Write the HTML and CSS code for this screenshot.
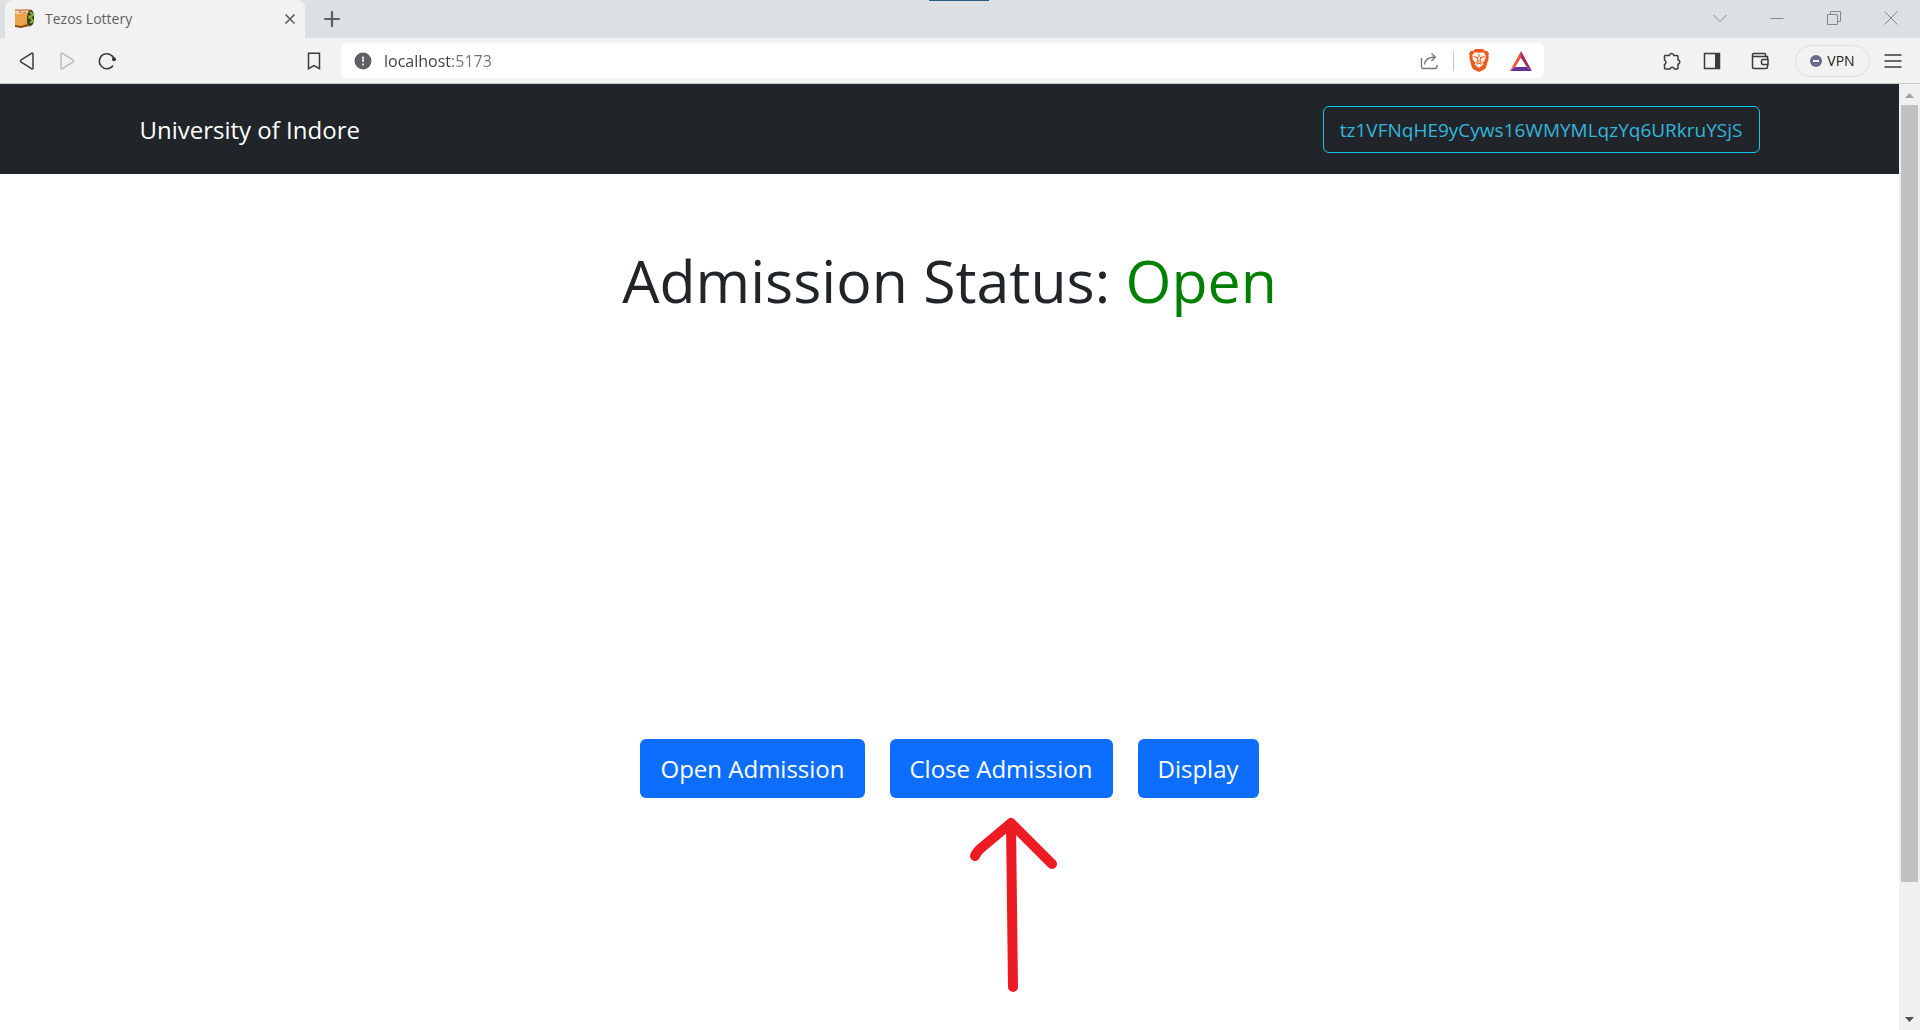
FILE: index.html
```html
<!DOCTYPE html>
<html lang="en">
<head>
<meta charset="utf-8">
<meta name="viewport" content="width=device-width, initial-scale=1">
<title>Tezos Lottery</title>
<link rel="stylesheet" href="styles.css">
</head>
<body>
<div class="window">
  <header class="tabstrip">
    <span class="grip" aria-hidden="true"></span>
    <div class="tab">
      <svg class="favicon" width="20" height="20" viewBox="0 0 20 20" aria-hidden="true">
        <path d="M0 1.500L15 .5l1 17L5 18.500 0 17z" fill="#e9a54b"/>
        <path d="M0 1.500L14 1l-1 3L1 5z" fill="#f6d7ae"/>
        <path d="M0 1h14M4 3h3M8 4l3-1" stroke="#c2572b" fill="none"/>
        <path d="M0 17l6 1 7-2" stroke="#8c4a17" stroke-width="2" fill="none"/>
        <path d="M15 1c3-1 4 4 4 8s-1 8-4 8-3-4-3-8 1-7 3-8z" fill="#33401d"/>
        <path d="M15 3l3 3-3 2 3 4-3 2" stroke="#82b536" stroke-width="2" fill="none"/>
        <path d="M14 6v4M16 12v2" stroke="#d99a35" fill="none"/>
      </svg>
      <span class="tab-title">Tezos Lottery</span>
      <button class="tab-close" type="button" aria-label="Close tab">
        <svg width="12" height="12" viewBox="0 0 12 12"><path d="M1.500 1.500l9 9m0-9l-9 9" stroke="#5a5c5e" stroke-width="1.600"/></svg>
      </button>
    </div>
    <button class="new-tab" type="button" aria-label="New tab">
      <svg width="16" height="16" viewBox="0 0 16 16"><path d="M8 1v14M1 8h14" stroke="#5c5e60" stroke-width="2.200" stroke-linecap="round"/></svg>
    </button>
    <div class="window-controls">
      <button type="button" aria-label="Search tabs"><svg width="14" height="14" viewBox="0 0 14 14"><path d="M.5 4L7 10.500 13.500 4"/></svg></button>
      <button type="button" aria-label="Minimize"><svg width="14" height="14" viewBox="0 0 14 14"><path d="M.5 7.500h13"/></svg></button>
      <button type="button" aria-label="Restore"><svg width="14" height="14" viewBox="0 0 14 14"><path d="M.5 3.500h10v10H.5zM3.500 3V.5h10v10H11"/></svg></button>
      <button type="button" aria-label="Close"><svg width="14" height="14" viewBox="0 0 14 14"><path d="M.5.5l13 13m0-13l-13 13"/></svg></button>
    </div>
  </header>

  <div class="toolbar">
    <div class="nav-buttons">
      <button class="icon-button" type="button" aria-label="Back"><svg width="18" height="18" viewBox="0 0 18 18"><path d="M13.500 1.300Q15 .6 15 2.300v13.400q0 1.700-1.500 1L3.200 10.100q-1.500-1.100 0-2.200z"/></svg></button>
      <button class="icon-button icon-disabled" type="button" aria-label="Forward" disabled><svg width="18" height="18" viewBox="0 0 18 18"><path d="M4.500 1.300Q3 .6 3 2.300v13.400q0 1.700 1.500 1l10.300-6.600q1.500-1.100 0-2.200z"/></svg></button>
      <button class="icon-button" type="button" aria-label="Reload"><svg width="18" height="18" viewBox="0 0 18 18"><path d="M15 13.500A7.500 7.500 0 1 1 16 7"/><circle cx="16" cy="7.200" r="2" fill="#333"/></svg></button>
      <button class="icon-button bookmark" type="button" aria-label="Bookmark"><svg width="18" height="18" viewBox="0 0 18 18"><path d="M3.500 1.200h11v15.500L9 13.600l-5.500 3.100z"/></svg></button>
    </div>
    <div class="address">
      <button class="site-info" type="button" aria-label="Site information"><svg width="18" height="18" viewBox="0 0 18 18"><circle cx="9" cy="9" r="8.500" fill="#5f6066"/><path d="M9 4.500V10M9 11.500v2" stroke="#fff" stroke-width="1.500"/></svg></button>
      <input class="url" type="text" value="localhost:5173" aria-label="Address">
      <button class="share" type="button" aria-label="Share"><svg width="18" height="18" viewBox="0 0 18 18"><path d="M1.500 6v8.500q0 2 2 2H15q2 0 2-2V13M4.500 12.500Q5 5.500 15 5M11.500 1.500L15.300 5l-3.800 4" fill="none" stroke="#75777a" stroke-width="1.400"/></svg></button>
      <span class="divider"></span>
      <button class="shield" type="button" aria-label="Brave Shields"><svg width="20" height="23" viewBox="0 0 20 23"><path d="M6 0h8l2 2 2-.3L20 4.500l-.7 2.300.5 1.700-2.600 9.400q-.5 1.800-2 2.700L10 23l-5.200-2.400q-1.500-.9-2-2.700L.2 8.500l.5-1.700L0 4.500l2-2.800 2 .3z" fill="#ec5a20"/><path d="M10 3.800l4.500-.5 2.200 3-.5 4.200-2.400 3.300.4 2-4.200 3.200-4.200-3.200.4-2-2.400-3.300-.5-4.200 2.200-3z" fill="#fff2eb"/><path d="M4.500 7.500l4 1.200.5 4-2.500.8M15.500 7.500l-4 1.200-.5 4 2.500.8M7.500 15.300L10 14l2.500 1.300M10 5v3" fill="none" stroke="#ec5a20" stroke-width="1.100"/></svg></button>
      <button class="rewards" type="button" aria-label="Brave Rewards"><svg width="22" height="20" viewBox="0 0 22 20"><path d="M11 0v7L5.500 15.500 0 20z" fill="#ef5a35"/><path d="M11 0l11 20-5.500-4.500L11 7z" fill="#9e2a67"/><path d="M0 20l5-4h12l5 4z" fill="#64309a"/><path d="M11 7l5 9H6z" fill="#fff"/></svg></button>
    </div>
    <div class="tools">
      <button class="icon-button" type="button" aria-label="Extensions"><svg width="18" height="18" viewBox="0 0 18 18"><path d="M2 3.500h4.200a2.400 2.400 0 0 1 4.700 0H14q1 0 1 1v3.200a2.300 2.300 0 0 1 0 4.500V16q0 1-1 1h-2.600a2.300 2.300 0 0 0-4.400 0H2.500q-1 0-1-1v-3.500a2.400 2.400 0 0 0 0-4.400V4.500z"/></svg></button>
      <button class="icon-button" type="button" aria-label="Sidebar"><svg width="18" height="18" viewBox="0 0 18 18"><path d="M1.500 1.500h15v15h-15z"/><rect x="12" y="1" width="5" height="16" fill="#3b3b3b"/></svg></button>
      <button class="icon-button wallet" type="button" aria-label="Wallet"><svg width="18" height="18" viewBox="0 0 18 18"><path d="M16.500 7V4.500h-15M14.500 4V2.500Q14.500 1.500 13.500 1.500H3q-1.500 0-1.500 1.500v12q0 1.500 1.500 1.500h12q1.500 0 1.500-1.500v-2M17 7.500h-5q-1.500 0-1.500 1.500v2q0 1.500 1.500 1.500h5z"/></svg></button>
      <button class="vpn" type="button"><svg width="12" height="12" viewBox="0 0 12 12" aria-hidden="true"><circle cx="6" cy="6" r="6" fill="#666d8f"/><path d="M3 6h6" stroke="#fff" stroke-width="1.800"/></svg>VPN</button>
      <button class="icon-button" type="button" aria-label="Menu"><svg width="18" height="14" viewBox="0 0 18 14"><path d="M.5 1h17M.5 7h17M.5 13h17"/></svg></button>
    </div>
  </div>

  <div class="viewport">
    <div class="page">
      <nav class="navbar">
        <div class="container">
          <a class="brand" href="#">University of Indore</a>
          <button class="account" type="button">tz1VFNqHE9yCyws16WMYMLqzYq6URkruYSjS</button>
        </div>
      </nav>
      <main class="content">
        <h1 class="status">Admission Status: <span class="status-open">Open</span></h1>
        <div class="actions">
          <button class="action" type="button">Open Admission</button>
          <div class="pointed">
            <button class="action" type="button">Close Admission</button>
            <svg class="arrow" width="90" height="180" viewBox="0 0 90 180" aria-hidden="true"><path d="M43 11L45 174M7 43Q8 40 12 36L43 10L84 51"/></svg>
          </div>
          <button class="action" type="button">Display</button>
        </div>
      </main>
    </div>
    <div class="scrollbar" aria-hidden="true">
      <svg class="scroll-arrow" width="21" height="21" viewBox="0 0 21 21"><path d="M6 14l4.500-5 4.500 5z" fill="#a3a3a3"/></svg>
      <div class="track"><div class="thumb"></div></div>
      <svg class="scroll-arrow" width="21" height="21" viewBox="0 0 21 21"><path d="M6 8h9l-4.500 5z" fill="#505050"/></svg>
    </div>
  </div>
</div>
</body>
</html>
```
FILE: styles.css
```css
* {
  box-sizing: border-box;
}

body {
  margin: 0;
  background: #fff;
  color: #212529;
  font-family: "Open Sans", "Noto Sans", sans-serif;
}

button {
  display: flex;
  align-items: center;
  justify-content: center;
  margin: 0;
  padding: 0;
  border: 0;
  background: none;
  font-family: inherit;
  cursor: pointer;
}

.window {
  display: flex;
  flex-direction: column;
  min-height: 100vh;
}

/* Tab strip */
.tabstrip {
  position: relative;
  display: flex;
  height: 38px;
  padding-left: 5px;
  background: #dce0e3;
}

.grip {
  position: absolute;
  top: 0;
  left: 50%;
  width: 60px;
  height: 1px;
  margin-left: -31px;
  background: #2a5c84;
}

.tab {
  display: flex;
  align-items: center;
  width: 300px;
  padding: 0 9px 1px 10px;
  border-radius: 8px 8px 0 0;
  background: #f2f2f2;
}

.tab-title {
  flex: 1;
  margin-left: 10px;
  color: #5f6163;
  font-size: 14px;
}

.new-tab {
  width: 54px;
}

.window-controls {
  display: flex;
  margin-left: auto;
  padding: 0 1px 2px 0;
}

.window-controls button {
  width: 57px;
}

.window-controls path {
  fill: none;
  stroke: #85888b;
}

/* Toolbar */
.toolbar {
  display: flex;
  align-items: center;
  height: 46px;
  padding: 0 7px;
  border-bottom: 1px solid #c8c9ca;
  background: #f2f2f2;
}

.nav-buttons {
  display: flex;
  width: 327px;
  margin-right: 7px;
}

.icon-button {
  width: 40px;
  height: 32px;
}

.icon-button path {
  fill: none;
  stroke: #3b3b3b;
  stroke-width: 1.5;
}

.icon-disabled path {
  stroke: #bbb;
}

.bookmark {
  margin-left: auto;
}

.address {
  display: flex;
  flex: 1;
  align-items: center;
  height: 35px;
  padding: 0 12px 0 13px;
  border-radius: 5px;
  background: #fff;
}

.url {
  flex: 1;
  min-width: 0;
  margin-left: 12px;
  padding: 0;
  border: 0;
  outline: 0;
  background: linear-gradient(90deg, #3c3c3c 67px, #757575 67px);
  -webkit-background-clip: text;
  background-clip: text;
  color: transparent;
  font-family: inherit;
  font-size: 16px;
}

.divider {
  width: 1px;
  height: 20px;
  margin: 0 15px;
  background: #c5c5c7;
}

.rewards {
  margin-left: 21px;
}

.tools {
  display: flex;
  align-items: center;
  margin-left: 108px;
}

.wallet {
  margin-left: 8px;
}

.vpn {
  gap: 5px;
  width: 75px;
  height: 32px;
  margin: 0 3px 0 15px;
  border: 1px solid #dedee2;
  border-radius: 16px;
  color: #222;
  font-size: 14px;
}

/* Page */
.viewport {
  display: flex;
  flex: 1;
}

.page {
  flex: 1;
  min-width: 0;
}

.navbar {
  padding: 22px 0 21px;
  background: #212529;
}

.container {
  display: flex;
  align-items: center;
  justify-content: space-between;
  max-width: 1650px;
  margin: 0 auto;
  padding: 0 15px;
}

.brand {
  color: #fff;
  font-size: 24px;
  line-height: 38px;
  text-decoration: none;
}

.account {
  height: 47px;
  padding: 0 16px;
  border: 1px solid #0dcaf0;
  border-radius: 6px;
  color: #33b6dc;
  font-size: 19px;
}

.content {
  padding: 69px 15px 0;
  text-align: center;
}

.status {
  margin: 0;
  font-size: 59px;
  font-weight: 400;
  line-height: 75px;
}

.status-open {
  color: #008000;
}

.actions {
  display: flex;
  justify-content: center;
  gap: 25px;
  margin-top: 421px;
}

.action {
  height: 59px;
  padding: 0 20px;
  border-radius: 6px;
  background: #0d6efd;
  color: #fff;
  font-size: 24px;
}

.pointed {
  position: relative;
}

.arrow {
  position: absolute;
  top: 100%;
  left: 50%;
  margin: 15px 0 0 -33px;
}

.arrow path {
  fill: none;
  stroke: #ed1c24;
  stroke-width: 10;
  stroke-linecap: round;
  stroke-linejoin: round;
}

/* Scrollbar */
.scrollbar {
  display: flex;
  flex-direction: column;
  width: 21px;
  background: #f0f0f0;
}

.scroll-arrow {
  flex: none;
}

.track {
  flex: 1;
  padding: 0 2px;
}

.thumb {
  height: 86%;
  background: #c1c1c1;
}
```
